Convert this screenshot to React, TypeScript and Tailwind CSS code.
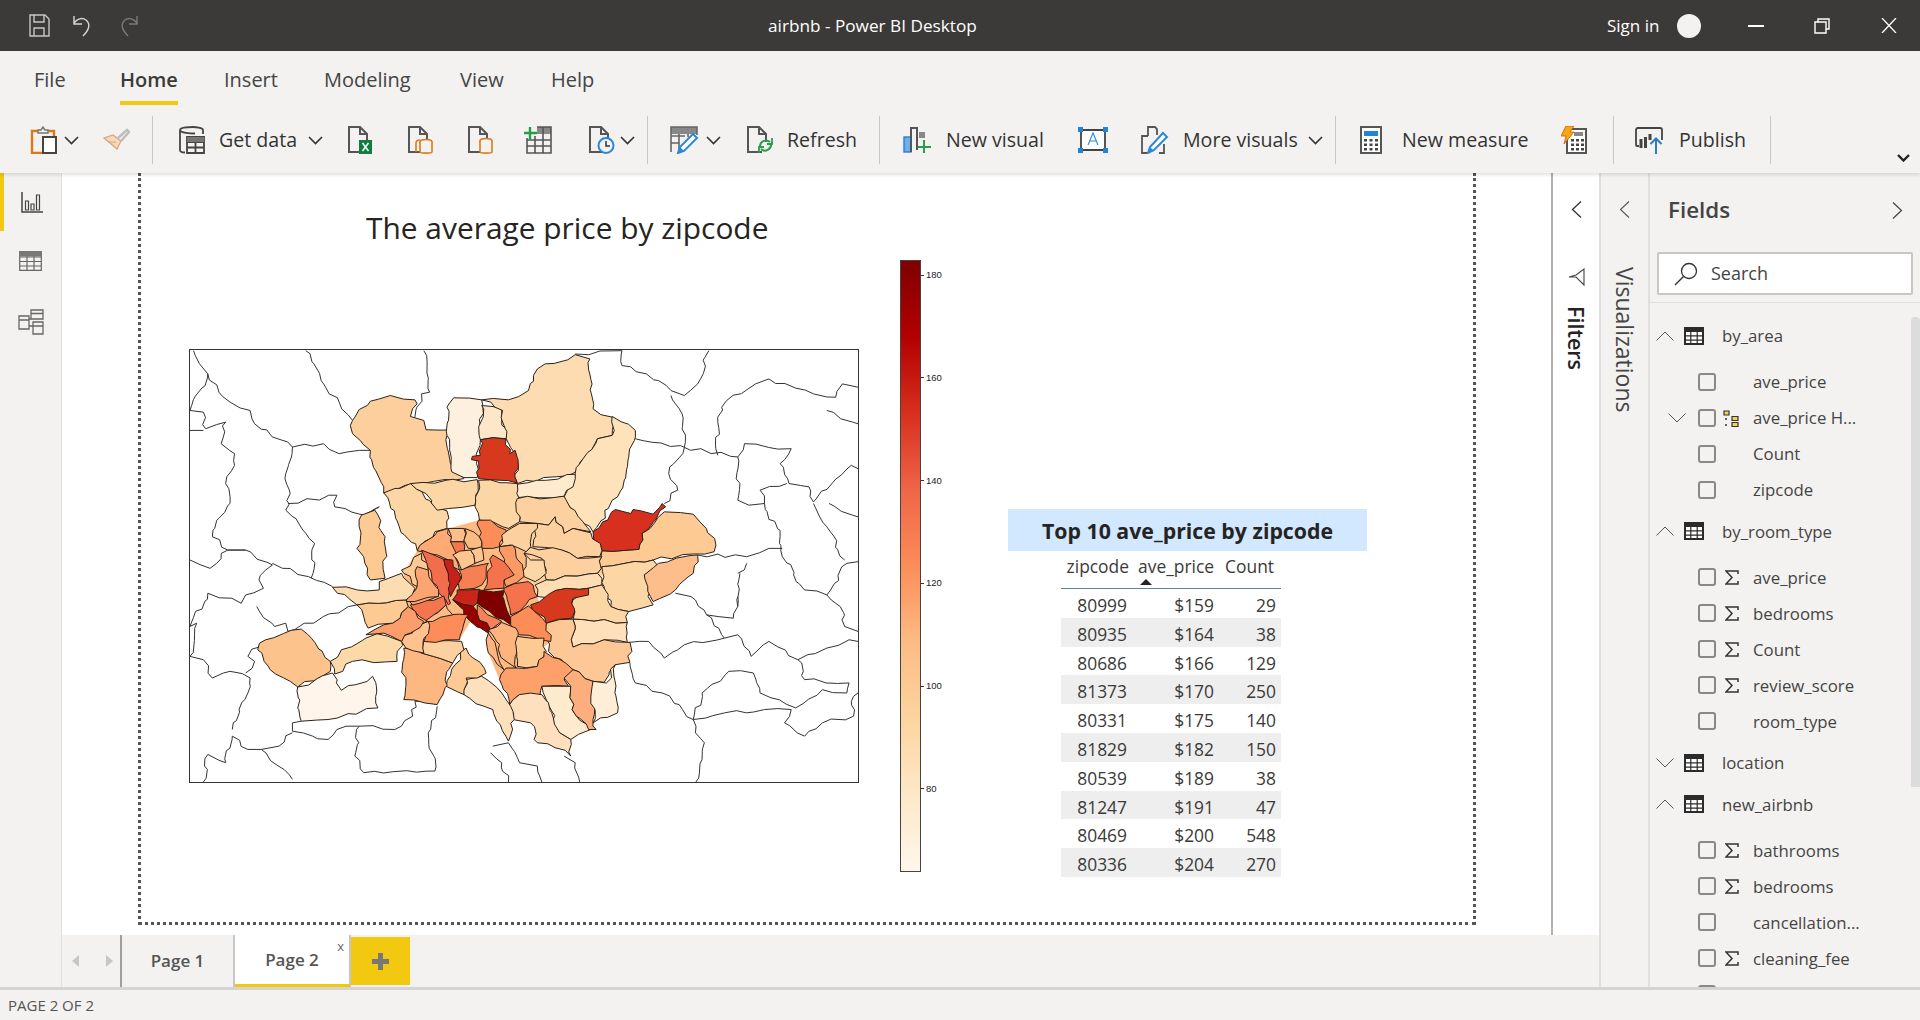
import { ReactNode } from "react";

const SEGOE = "font-['Open_Sans','Noto_Sans',sans-serif]";

// choropleth shapes, coordinates in map units (viewBox 20 28 1500 1300)
const ZONES: [string, string][] = [
  ["#fdcf9c", "385,240 425,182 470,165 525,178 530,190 515,228 545,240 550,268 610,268 597,285 605,370 635,415 520,430 455,458 425,330 385,280"],
  ["#fef0df", "597,285 597,200 612,172 675,178 672,300 665,355 665,412 635,412 608,395"],
  ["#fee6c9", "675,195 720,205 730,295 700,292 672,298"],
  ["#fddcb2", "675,178 735,178 780,150 800,85 885,42 918,55 925,205 968,230 968,285 935,295 880,400 755,430 750,340 730,295 722,210"],
  ["#d7391f", "672,298 700,292 730,296 738,340 750,330 755,428 668,415 668,362 652,358 654,348 672,345"],
  ["#fee2ba", "968,228 1020,270 1018,300 980,470 925,575 880,520 860,470 885,400 935,295 968,285"],
  ["#feeacd", "755,432 885,402 880,440 860,468 755,472"],
  ["#fdd6a6", "455,458 515,430 570,500 597,512 597,565 570,575 530,630 490,560"],
  ["#fdd6a6", "515,430 665,418 660,495 600,505 575,510 550,460"],
  ["#fdd6a6", "668,420 755,430 755,510 760,545 735,565 700,545 670,540 660,500"],
  ["#fdd09f", "755,475 860,468 920,575 880,565 860,580 840,530 825,555 800,550 760,545"],
  ["#fdca94", "1035,580 1085,515 1150,522 1165,545 1198,595 1197,635 1060,660 945,680 935,700 945,632 1028,628"],
  ["#d7301f", "925,575 975,508 1010,520 1015,508 1060,522 1080,490 1088,500 1035,580 1028,628 945,632"],
  ["#fdd09f", "800,550 825,555 840,530 860,580 880,565 920,578 945,632 940,650 890,655 855,630 790,620"],
  ["#fdd09f", "785,622 855,630 890,655 945,650 935,700 820,720 820,690 810,655 770,640"],
  ["#feddb4", "795,735 820,720 935,700 945,735 915,745 840,752 835,775 800,770"],
  ["#fdd6a6", "770,640 785,660 815,660 820,700 795,725 770,710"],
  ["#fdd6a6", "945,680 1060,660 1072,680 1040,705 1060,795 1005,815 965,800 950,740"],
  ["#fdbe8c", "1072,670 1160,645 1150,700 1110,750 1060,785 1040,705"],
  ["#fdd6a6", "880,780 915,745 945,735 965,800 1005,815 1002,848 880,838"],
  ["#fee0bb", "880,838 1002,848 1002,908 950,900 880,922"],
  ["#fdc895", "820,850 880,838 880,922 950,900 1008,908 1008,968 975,975 950,1028 925,1025 880,990 825,935"],
  ["#d7391f", "785,795 840,752 915,745 915,765 880,775 878,835 820,850"],
  ["#fdaa75", "530,632 575,575 600,565 610,615 635,640 615,650 625,690 600,660 555,640"],
  ["#f26d4b", "540,630 590,658 600,700 605,790 600,795 575,755 560,690"],
  ["#c8201a", "590,658 610,660 628,715 615,745 605,770 600,700"],
  ["#fdbe8c", "600,565 635,565 635,605 605,605"],
  ["#f4754e", "605,605 635,605 635,640 620,645"],
  ["#fdbb84", "637,565 670,590 675,625 645,625 635,600"],
  ["#fc8d59", "668,540 695,540 730,570 715,620 700,625 675,625 670,590"],
  ["#fdd09f", "720,585 760,550 800,550 785,620 775,635 740,615 715,620"],
  ["#fc9a65", "715,620 745,615 770,710 730,740 725,670"],
  ["#f4734c", "700,645 725,665 748,705 725,720 725,745 680,750 690,690"],
  ["#f67f53", "625,690 690,670 685,715 660,745 625,750"],
  ["#fdc58f", "610,645 650,630 660,670 630,690"],
  ["#fdc58f", "650,630 675,620 680,660 660,670"],
  ["#c92519", "620,750 670,748 670,785 655,800 610,780"],
  ["#7f0000", "670,750 725,752 740,855 665,790"],
  ["#990000", "610,780 655,798 665,815 695,860 690,880 650,845"],
  ["#f5825a", "665,795 720,845 695,870 665,820"],
  ["#f4734c", "725,745 780,725 800,770 740,825 725,752"],
  ["#fc8d59", "740,830 780,798 820,850 830,905 760,885 740,855"],
  ["#fdb47f", "690,870 720,848 752,865 752,985 730,965"],
  ["#fdb47f", "685,900 690,880 725,990 690,940"],
  ["#fdca94", "755,890 815,895 820,935 800,980 755,980"],
  ["#fda06a", "815,935 880,990 860,1020 870,1040 810,1040 805,1075 760,1065 738,1095 715,1020 730,985 755,985 800,980"],
  ["#feeacd", "810,1040 875,1040 878,1110 920,1170 875,1200 850,1180 820,1080"],
  ["#fcae7c", "880,990 925,1025 925,1140 932,1170 915,1170 878,1110 875,1040 860,1015"],
  ["#feeed7", "925,1025 955,1030 975,975 980,1120 925,1150"],
  ["#fee0be", "738,1095 760,1065 810,1065 850,1180 875,1200 875,1250 840,1225 800,1210 785,1150 745,1140"],
  ["#fde0bd", "640,1020 675,1010 720,1060 740,1100 748,1140 735,1205 700,1110 680,1100 635,1065"],
  ["#fdca94", "640,925 685,1000 665,1015 640,1015 635,1065 595,1040 615,975"],
  ["#fdb780", "500,925 540,940 610,970 575,1095 500,1080"],
  ["#fdd09f", "545,905 630,905 635,930 610,970 540,940"],
  ["#fc8d59", "545,850 595,825 645,825 625,900 545,905"],
  ["#fdc28f", "495,905 525,860 555,845 545,940 505,925"],
  ["#fdbb85", "575,820 595,795 610,825 565,845 550,845"],
  ["#f4754e", "515,795 590,768 595,795 550,842 535,830"],
  ["#fda472", "505,765 555,745 575,770 520,795"],
  ["#fdca94", "495,690 540,640 555,690 530,740 500,700"],
  ["#fda572", "530,680 555,690 578,770 505,785 530,740"],
  ["#fc9d6c", "415,885 455,855 475,850 510,800 545,845 495,905 455,880"],
  ["#fdca94", "395,795 505,780 510,800 475,850 420,865"],
  ["#fddcb2", "340,742 445,750 445,725 495,700 525,745 505,780 395,795"],
  ["#fdca94", "405,525 435,510 458,590 458,715 425,720 410,650 395,625"],
  ["#fed9a8", "335,965 360,930 440,882 495,905 485,965 385,965 345,1003"],
  ["#fdc38c", "172,930 190,900 270,868 335,965 335,995 262,1042 200,990"],
  ["#fff5ea", "262,1042 340,1000 360,1052 430,1010 442,1105 330,1140 270,1145"],
];

// filled under the zones so that their rough edges leave no white slivers
const BACKING: [string, string][] = [
  ["#fdbb84", "530,632 600,565 668,540 760,550 800,550 800,770 830,905 755,985 715,1020 690,940 685,900 690,880 650,845 625,900 545,905 505,785 500,700"],
  ["#fdd09f", "760,545 860,470 945,632 945,735 840,752 800,770 780,725"],
];

const BORDERS = [
  "28,30 60,100 85,155 110,185 155,210 165,250 250,320 235,400 245,460 235,510 300,610 292,715",
  "280,30 320,130 355,185 385,240",
  "545,30 558,155 540,160 525,230",
  "250,320 320,310 355,340 400,330 425,330",
  "240,490 350,465 345,500 410,525 445,500",
  "885,40 990,30 990,75 1045,100 1100,150 1130,165 1160,130 1185,30",
  "1100,165 1125,220 1130,320",
  "1020,295 1250,350",
  "1205,345 1205,230 1225,180 1290,130 1320,115 1420,160 1470,170 1485,130 1520,140",
  "1450,210 1520,250",
  "1250,350 1265,310 1370,325 1345,370 1365,430 1410,440 1420,485 1505,375 1520,385",
  "1130,322 1095,400 1115,450 1085,490",
  "1250,350 1250,480 1275,495 1310,490 1300,450 1360,430",
  "1310,490 1345,590 1350,650 1400,750 1450,765 1495,670 1520,665",
  "1420,490 1450,560 1490,660",
  "1455,490 1520,530",
  "1160,645 1270,650 1320,625 1350,625",
  "1250,700 1270,670",
  "1250,800 1255,700",
  "1110,760 1145,770 1180,825 1240,835 1250,800 1250,770",
  "1180,825 1220,895 1250,885 1280,950 1320,905 1385,960 1450,925 1500,900 1520,905",
  "1005,908 1050,905 1085,955 1130,915 1220,895",
  "1450,765 1480,800 1490,860 1520,875",
  "1385,960 1400,1020 1500,1030 1495,1060 1440,1050 1380,1105 1300,1060 1285,1000 1230,995 1170,1060 1150,1140 1080,1060 1020,1030 1008,970",
  "1150,1140 1155,1180 1175,1210 1155,1330",
  "1150,1140 1220,1120 1310,1110 1370,1110 1355,1150 1400,1190 1440,1150 1510,1130 1510,1070 1520,1060",
  "60,100 20,210",
  "20,270 50,270",
  "20,210 50,215 55,265 100,245 90,310 120,340 120,375 100,430 110,470 70,590 105,630 145,630 205,675 190,690",
  "205,670 340,740",
  "190,690 175,720 185,745 145,765 135,790 60,760 20,860",
  "20,860 35,850 20,950",
  "145,630 105,630 65,685 20,660",
  "20,950 50,960 70,1015 110,995 155,1015 150,1060 115,1170",
  "190,900 150,950 165,965 145,1000",
  "170,800 210,860 235,850 240,875 395,795",
  "270,1145 250,1150 250,1175 330,1200 350,1170 400,1160 480,1170 520,1130 525,1085 575,1095",
  "400,1160 390,1250 410,1300 570,1295 555,1180 575,1100",
  "115,1190 150,1230 180,1230 220,1220 250,1180",
  "180,1230 250,1320",
  "60,1245 100,1270 115,1190",
  "60,1245 50,1328",
  "700,1220 735,1210 760,1270 800,1280 810,1328",
  "695,1240 720,1270 735,1328",
  "860,1250 885,1270 895,1328",
  "445,500 430,510",
];

const ROWS = [
  ["80999", "$159", "29"],
  ["80935", "$164", "38"],
  ["80686", "$166", "129"],
  ["81373", "$170", "250"],
  ["80331", "$175", "140"],
  ["81829", "$182", "150"],
  ["80539", "$189", "38"],
  ["81247", "$191", "47"],
  ["80469", "$200", "548"],
  ["80336", "$204", "270"],
];

type Field = { name: string; sigma?: boolean; hierarchy?: boolean };
type Group = { name: string; open: boolean; fields: Field[] };

const GROUPS: Group[] = [
  {
    name: "by_area",
    open: true,
    fields: [{ name: "ave_price" }, { name: "ave_price H...", hierarchy: true }, { name: "Count" }, { name: "zipcode" }],
  },
  {
    name: "by_room_type",
    open: true,
    fields: [
      { name: "ave_price", sigma: true },
      { name: "bedrooms", sigma: true },
      { name: "Count", sigma: true },
      { name: "review_score", sigma: true },
      { name: "room_type" },
    ],
  },
  { name: "location", open: false, fields: [] },
  {
    name: "new_airbnb",
    open: true,
    fields: [
      { name: "bathrooms", sigma: true },
      { name: "bedrooms", sigma: true },
      { name: "cancellation..." },
      { name: "cleaning_fee", sigma: true },
      { name: "guests_incl..." },
    ],
  },
];

// roughen a boundary: the offset only depends on the segment, so neighbouring zones keep a shared edge
function rough(points: string, closed: boolean) {
  const pts = points.split(" ").map((p) => p.split(",").map(Number));
  const out: string[] = [];
  const count = closed ? pts.length : pts.length - 1;
  for (let i = 0; i < count; i++) {
    const [ax, ay] = pts[i];
    const [bx, by] = pts[(i + 1) % pts.length];
    out.push(`${ax},${ay}`);
    const steps = Math.floor(Math.hypot(bx - ax, (by - ay) * 1.5) / 22);
    const seed = ax + bx + (ay + by) * 7;
    for (let s = 1; s < steps; s++) {
      const t = Math.min(ax, bx) === ax && (ax !== bx || ay < by) ? s / steps : 1 - s / steps;
      const n = Math.sin(seed * 0.37 + Math.min(s, steps - s) * 12.9898 + (t > 0.5 ? 1 : 0) * 4.1);
      const m = Math.cos(seed * 0.53 + Math.min(s, steps - s) * 78.233 + (t > 0.5 ? 1 : 0) * 2.3);
      const k = s / steps;
      out.push(`${(ax + (bx - ax) * k + n * 5).toFixed(1)},${(ay + (by - ay) * k + m * 5).toFixed(1)}`);
    }
  }
  if (!closed) out.push(pts[pts.length - 1].join(","));
  return out.join(" ");
}

function Icon({ w, h, children, className = "" }: { w: number; h: number; children: ReactNode; className?: string }) {
  return (
    <svg width={w} height={h} viewBox={`0 0 ${w} ${h}`} fill="none" className={`shrink-0 ${className}`}>
      {children}
    </svg>
  );
}

function Chevron({ className = "" }: { className?: string }) {
  return (
    <Icon w={15} h={9} className={className}>
      <path d="M1 1l6.5 6.5L14 1" stroke="#333" strokeWidth="1.6" />
    </Icon>
  );
}

function Doc({ children }: { children?: ReactNode }) {
  return (
    <Icon w={27} h={28}>
      <path d="M16 26H2V1h11l7 7v8M13 1v7h7" stroke="#555" strokeWidth="2" />
      {children}
    </Icon>
  );
}

function Divider({ className }: { className: string }) {
  return <div className={`h-[48px] w-px shrink-0 bg-[#c8c6c4] ${className}`} />;
}

function RibbonText({ className, children }: { className: string; children: ReactNode }) {
  return <span className={`shrink-0 whitespace-nowrap text-[19.600px] text-[#333] ${className}`}>{children}</span>;
}

function GridIcon() {
  return (
    <Icon w={20} h={18}>
      <rect width="20" height="18" fill="#2b2b2b" />
      <path d="M2 5h4.2v3.2H2zM7.4 5h5.2v3.2H7.4zM13.8 5H18v3.2h-4.2zM2 9.4h4.2v3.2H2zM7.4 9.4h5.2v3.2H7.4zM13.8 9.4H18v3.2h-4.2zM2 13.8h4.2V16H2zM7.4 13.8h5.2V16H7.4zM13.8 13.8H18V16h-4.2z" fill="#fff" />
    </Icon>
  );
}

function Ribbon() {
  return (
    <div className="relative z-10 h-[122px] shrink-0 bg-[#f3f2f1] shadow-[0_2px_3px_rgba(0,0,0,0.12)]">
      <div className="flex h-[65px] items-start pt-[13px] text-[20px] leading-[32px] text-[#444]">
        <span className="ml-[34px] w-[30px]">File</span>
        <div className="ml-[56px] w-[58px]">
          <span className="font-semibold text-[#3b3a39]">Home</span>
          <div className="mt-[5px] h-[4px] bg-[#f2c811]" />
        </div>
        <span className="ml-[46px] w-[53px]">Insert</span>
        <span className="ml-[47px] w-[87px]">Modeling</span>
        <span className="ml-[49px] w-[44px]">View</span>
        <span className="ml-[47px] w-[43px]">Help</span>
      </div>
      <div className="flex h-[48px] items-center">
        <Icon w={28} h={28} className="ml-[30px]">
          <path d="M2 5h22v22H2z" stroke="#d97a18" strokeWidth="2.4" />
          <path d="M8 7V4h3l2-3 2 3h3v3z" fill="#f3f2f1" stroke="#777" strokeWidth="1.4" />
          <path d="M13 11h13v16H13z" fill="#fff" stroke="#444" strokeWidth="2" />
        </Icon>
        <Chevron className="ml-[6px]" />
        <Icon w={27} h={24} className="ml-[24px]">
          <path d="M1 10l13 11 4-8-8-6z" fill="#f7d7ba" stroke="#d8a47f" strokeWidth="1.2" />
          <path d="M15 10l9-8 2 2-8 9" stroke="#bdbdbd" strokeWidth="2.4" />
          <path d="M5 14l8 0" stroke="#d8a47f" />
        </Icon>
        <Divider className="ml-[22px]" />
        <Icon w={27} h={28} className="ml-[25px]">
          <path d="M17 7.5C13 7.5 2 7 2 4s11-3 13-3 10 .5 10 3v4M2 4v20c0 1.5 2 2.5 5 2.5" stroke="#444" strokeWidth="1.8" />
          <path d="M9 11h17v16H9zM9 16h17M9 21.500h17M17.500 16v11" stroke="#444" strokeWidth="1.8" />
          <path d="M9 11h17v5H9z" fill="#777" />
        </Icon>
        <RibbonText className="ml-[14px] w-[80px]">Get data</RibbonText>
        <Chevron className="ml-[9px]" />
        <div className="ml-[24px]">
          <Doc>
            <rect x="12" y="14" width="13" height="14" fill="#107c41" />
            <path d="M15.500 17l6 8m0-8l-6 8" stroke="#fff" strokeWidth="1.5" />
          </Doc>
        </div>
        <div className="ml-[33px]">
          <Doc>
            <path d="M9 26v-9c0-2 2-3 4-3" stroke="#d97a18" strokeWidth="1.6" />
            <ellipse cx="19" cy="16" rx="6" ry="2.500" stroke="#d97a18" strokeWidth="1.6" fill="#f3f2f1" />
            <path d="M13 16v10c0 1.500 12 1.500 12 0V16" stroke="#d97a18" strokeWidth="1.6" fill="#f3f2f1" />
          </Doc>
        </div>
        <div className="ml-[33px]">
          <Doc>
            <ellipse cx="19" cy="15" rx="6" ry="2.500" stroke="#d97a18" strokeWidth="1.6" fill="#f3f2f1" />
            <path d="M13 15v11c0 1.500 12 1.500 12 0V15" stroke="#d97a18" strokeWidth="1.6" fill="#f3f2f1" />
          </Doc>
        </div>
        <Icon w={28} h={28} className="ml-[30px]">
          <path d="M13 1h14v7H13z" fill="#8a8886" />
          <path d="M3 12v15h24V1h-14M3 14h24M3 20h24M11 10v17M19 1v26" stroke="#555" strokeWidth="1.6" />
          <path d="M6 1v13M0 7h13" stroke="#2a9d4a" strokeWidth="2.4" />
        </Icon>
        <div className="ml-[36px]">
          <Doc>
            <circle cx="18" cy="19.500" r="7.500" fill="#f3f2f1" stroke="#2b88d8" strokeWidth="2" />
            <path d="M18 15v5h4" stroke="#333" strokeWidth="1.5" />
          </Doc>
        </div>
        <Chevron className="ml-[5px]" />
        <Divider className="ml-[12px]" />
        <Icon w={30} h={28} className="ml-[22px]">
          <path d="M1 1h26v7H1z" fill="#8a8886" />
          <path d="M1 26V1h26v8M1 10h14M1 17h8M9 8v18M18 8v3" stroke="#666" strokeWidth="1.6" />
          <path d="M8 27l2-6L23 8l4 4-13 13z" fill="#fff" stroke="#2b88d8" strokeWidth="2" />
          <path d="M10 21l4 4-5 2z" fill="#2b88d8" />
        </Icon>
        <Chevron className="ml-[6px]" />
        <div className="ml-[25px]">
          <Doc>
            <path d="M14 20a6 6 0 0 1 10-4M25 18a6 6 0 0 1-10 5" stroke="#2a9d4a" strokeWidth="2" />
            <path d="M26 12v6h-5M13 27v-6h5" stroke="#2a9d4a" strokeWidth="1.8" />
          </Doc>
        </div>
        <RibbonText className="ml-[14px] w-[68px]">Refresh</RibbonText>
        <Divider className="ml-[24px]" />
        <Icon w={28} h={28} className="ml-[23px]">
          <rect x="1" y="11" width="7" height="15" fill="#6cb0ec" stroke="#2b7cd3" strokeWidth="1.4" />
          <path d="M8 26V2h6v22" stroke="#555" strokeWidth="2" />
          <rect x="16" y="6" width="6" height="6" fill="#8a8886" />
          <path d="M21 14v13M15 21h13" stroke="#2a9d4a" strokeWidth="2" />
        </Icon>
        <RibbonText className="ml-[15px] w-[98px]">New visual</RibbonText>
        <Icon w={30} h={26} className="ml-[34px]">
          <path d="M3 3h24v20H3z" stroke="#444" strokeWidth="1.8" fill="#fff" />
          <path d="M0 0h5v5H0zM25 0h5v5h-5zM0 21h5v5H0zM25 21h5v5h-5z" fill="#1f86d6" />
          <path d="M10 18l5-12 5 12M12 14h6" stroke="#2b88d8" strokeWidth="1.1" />
        </Icon>
        <Icon w={28} h={28} className="ml-[33px]">
          <path d="M7 27H1V10h5M7 10V1h7l2 2v6M23 18v9h-5M6 10h1" stroke="#555" strokeWidth="1.8" />
          <path d="M7 27l2-6L22 7l4 4-13 13z" fill="#fff" stroke="#2b88d8" strokeWidth="2" />
          <path d="M9 21l4 4-6 2z" fill="#2b88d8" />
        </Icon>
        <RibbonText className="ml-[14px] w-[115px]">More visuals</RibbonText>
        <Chevron className="ml-[10px]" />
        <Divider className="ml-[12px]" />
        <Icon w={22} h={28} className="ml-[24px]">
          <rect x="1" y="1" width="20" height="26" fill="#fff" stroke="#555" strokeWidth="2" />
          <rect x="4" y="5" width="14" height="5" fill="#1f86d6" />
          <path d="M4 13h3v2.500H4zM9.500 13h3v2.500h-3zM15 13h3v2.500h-3zM4 17.500h3V20H4zM9.500 17.500h3V20h-3zM15 17.500h3V20h-3zM4 22h3v2.500H4zM9.500 22h3v2.500h-3zM15 22h3v2.500h-3z" fill="#444" />
        </Icon>
        <RibbonText className="ml-[20px] w-[125px]">New measure</RibbonText>
        <Icon w={26} h={28} className="ml-[34px]">
          <rect x="6" y="3" width="19" height="24" fill="#fff" stroke="#555" strokeWidth="2" />
          <rect x="13" y="6" width="9" height="4" fill="#8a8886" />
          <path d="M10 13h3v2.500h-3zM15 13h3v2.500h-3zM20 13h3v2.500h-3zM10 17.500h3V20h-3zM15 17.500h3V20h-3zM20 17.500h3V20h-3zM10 22h3v2.500h-3zM15 22h3v2.500h-3zM20 22h3v2.500h-3z" fill="#444" />
          <path d="M5 0h8L9 6h4L3 18l2-8H0z" fill="#f7a711" stroke="#c75b12" strokeWidth="0.8" />
        </Icon>
        <Divider className="ml-[26px]" />
        <Icon w={30} h={28} className="ml-[21px]">
          <path d="M4 20H2c-1 0-1-1-1-2V4c0-1 .5-2 2-2h22c1 0 2 1 2 2v10" stroke="#444" strokeWidth="1.8" />
          <path d="M6 13v9M10.500 11v11M15 8v6" stroke="#444" strokeWidth="3" />
          <path d="M21 28V13M15.500 18l5.500-5.500 5.500 5.500" stroke="#2b7cb8" strokeWidth="2" />
        </Icon>
        <RibbonText className="ml-[14px] w-[66px]">Publish</RibbonText>
        <Divider className="ml-[25px]" />
        <Icon w={13} h={8} className="ml-[126px] mt-[36px]">
          <path d="M1 1l5.500 5.500L12 1" stroke="#222" strokeWidth="2.400" />
        </Icon>
      </div>
    </div>
  );
}

function TitleBar() {
  return (
    <div className="flex h-[51px] shrink-0 items-center bg-[#3b3a38] text-white">
      <Icon w={22} h={23} className="ml-[28px]">
        <path d="M2 1h15l4 4v17H2zM6 1v7h10V1M6 22v-8h10v8" stroke="#c8c6c4" strokeWidth="1.4" />
      </Icon>
      <Icon w={21} h={23} className="ml-[22px]">
        <path d="M2 2v8h8M2 9c3-4 8-6 12-3 5 4 3 10-3 16" stroke="#d6d6d6" strokeWidth="1.400" />
      </Icon>
      <Icon w={21} h={23} className="ml-[25px]">
        <path d="M19 2v8h-8M19 9c-3-4-8-6-12-3-5 4-3 10 3 16" stroke="#7b7a78" strokeWidth="1.400" />
      </Icon>
      <div className="ml-[629px] w-[208px] whitespace-nowrap text-center text-[17.200px]">airbnb - Power BI Desktop</div>
      <div className="ml-[631px] w-[54px] whitespace-nowrap text-[17px]">Sign in</div>
      <div className="ml-[16px] h-[24px] w-[24px] rounded-full bg-[#f3f2f1]" />
      <div className="ml-[47px] h-[2px] w-[16px] bg-white" />
      <Icon w={17} h={16} className="ml-[50px]">
        <path d="M1 4h11v11H1zM4 4V1h11v10h-3" stroke="#fff" strokeWidth="1.400" />
      </Icon>
      <Icon w={16} h={15} className="ml-[50px]">
        <path d="M1 0l14 15M15 0L1 15" stroke="#fff" strokeWidth="1.300" />
      </Icon>
    </div>
  );
}

function LeftRail() {
  return (
    <div className="flex w-[62px] shrink-0 flex-col border-r border-[#e1dfdd] bg-[#f3f2f1]">
      <div className="flex h-[58px] items-center border-l-[4px] border-[#f2c811] pl-[17px]">
        <Icon w={22} h={21}>
          <path d="M1 0v20h21" stroke="#444" strokeWidth="1.500" />
          <path d="M4.500 9h3v9h-3zM10 12h3v6h-3zM15.500 3h3v15h-3z" stroke="#444" strokeWidth="1.200" />
        </Icon>
      </div>
      <div className="mt-[20px] flex justify-center">
        <Icon w={23} h={20}>
          <path d="M.7.7h21.600v18.600H.7zM.7 6h21.600M.7 10.500h21.600M.7 15h21.600M8 .7v18.600M15 .7v18.600" stroke="#666" strokeWidth="1.200" />
          <path d="M0 0h23v5.500H0z" fill="#777" />
        </Icon>
      </div>
      <div className="mt-[38px] flex justify-center">
        <Icon w={26} h={26}>
          <path d="M1 7h10v13H1zM1 11h10M13 1h12v9H13zM13 4.500h12M15 13h10v12H15zM15 17h10M11 10h2M11 17h4" stroke="#666" strokeWidth="1.300" />
        </Icon>
      </div>
    </div>
  );
}

function PriceMap() {
  return (
    <div className="h-[434px] w-[670px] border border-[#333] bg-white">
      <svg width="668" height="432" viewBox="20 28 1500 1300" preserveAspectRatio="none" className="block">
        {BORDERS.map((line) => (
          <polyline key={line} points={rough(line, false)} fill="none" stroke="#333" strokeWidth="1" vectorEffect="non-scaling-stroke" />
        ))}
        {BACKING.map(([color, points]) => (
          <polygon key={points} points={points} fill={color} />
        ))}
        {ZONES.map(([color, points]) => (
          <polygon key={points} points={rough(points, true)} fill={color} stroke="#2b2118" strokeWidth="1" strokeLinejoin="round" vectorEffect="non-scaling-stroke" />
        ))}
      </svg>
    </div>
  );
}

function ColorBar() {
  return (
    <div className="ml-[41px] mt-[87px] flex h-[612px] w-[108px] shrink-0">
      <div className="h-full w-[21px] border border-[#444] bg-[linear-gradient(to_top,#fff7ec,#fee8c8_12.5%,#fdd49e_25%,#fdbb84_37.5%,#fc8d59_50%,#ef6548_62.5%,#d7301f_75%,#b30000_87.5%,#7f0000)]" />
      <div className="flex flex-col pt-[9px]">
        {[180, 160, 140, 120, 100, 80].map((tick) => (
          <div key={tick} className="flex h-[102.800px] shrink-0 items-start font-['Liberation_Sans',sans-serif] text-[9.500px] leading-[12px] text-[#222]">
            <div className="mr-[2px] mt-[5.500px] h-px w-[3px] bg-[#333]" />
            {tick}
          </div>
        ))}
      </div>
    </div>
  );
}

function TopTable() {
  return (
    <div className={`mt-[336px] w-[359px] shrink-0 ${SEGOE}`}>
      <div className="flex h-[42px] items-center justify-center bg-[#d2e8fe] pt-[1px] text-[21.300px] font-bold whitespace-nowrap text-[#252423]">
        Top 10 ave_price by zipcode
      </div>
      <div className="ml-[53px] w-[220px] text-[17.400px] text-[#3b3a39]">
        <div className="grid h-[38px] grid-cols-[73px_86px_61px] border-b border-[#5b7fa5] leading-[30px]">
          <div className="pr-[5px] text-right">zipcode</div>
          <div className="relative pr-[6px] text-right">
            ave_price
            <div className="absolute left-[6px] top-[28px] h-0 w-0 border-x-[6px] border-b-[6px] border-x-transparent border-b-[#252423]" />
          </div>
          <div className="pr-[7px] text-right">Count</div>
        </div>
        {ROWS.map((row, i) => (
          <div key={row[0]} className={`grid h-[28.800px] grid-cols-[73px_86px_61px] leading-[32px] ${i % 2 ? "bg-[#eeeeee]" : "bg-white"}`}>
            <div className="pr-[7px] text-right">{row[0]}</div>
            <div className="pr-[6px] text-right">{row[1]}</div>
            <div className="pr-[5px] text-right">{row[2]}</div>
          </div>
        ))}
      </div>
    </div>
  );
}

function PageTabs() {
  return (
    <div className="flex h-[52px] shrink-0 bg-[#f3f2f1] text-[17px] font-semibold text-[#555]">
      <div className="flex w-[58px] items-center gap-[27px] pl-[10px]">
        <div className="h-0 w-0 border-y-[6px] border-r-[7px] border-y-transparent border-r-[#c8c6c4]" />
        <div className="h-0 w-0 border-y-[6px] border-l-[7px] border-y-transparent border-l-[#c8c6c4]" />
      </div>
      <div className="flex w-[115px] items-center justify-center border-x-2 border-l-[#a19f9d] border-r-[#c8c6c4]">Page 1</div>
      <div className="relative flex w-[116px] items-center justify-center border-b-[3px] border-r-2 border-[#f2c811] border-r-[#c8c6c4] bg-white">
        Page 2
        <span className="absolute right-[5px] top-[5px] text-[13px] leading-[13px] font-normal text-[#666]">x</span>
      </div>
      <div className="mt-[2px] flex h-[48px] w-[59px] items-center justify-center bg-[#f2c811]">
        <Icon w={17} h={17}>
          <path d="M8.500 0v17M0 8.500h17" stroke="#777" strokeWidth="5" />
        </Icon>
      </div>
    </div>
  );
}

function FieldsPane() {
  return (
    <div className={`flex min-w-0 flex-1 flex-col overflow-hidden bg-[#f3f2f1] ${SEGOE}`}>
      <div className="flex h-[79px] shrink-0 items-start pl-[18px] pt-[21px]">
        <span className="w-[63px] text-[22.400px] leading-[32px] font-semibold whitespace-nowrap text-[#444]">Fields</span>
        <Icon w={11} h={17} className="ml-[161px] mt-[8px]">
          <path d="M1 .5l8.500 8-8.500 8" stroke="#444" strokeWidth="1.200" />
        </Icon>
      </div>
      <div className="mx-[7px] flex h-[43px] shrink-0 items-center rounded-[2px] border-2 border-[#c8c6c4] bg-white pl-[15px]">
        <Icon w={24} h={24}>
          <circle cx="15" cy="9" r="7.500" stroke="#333" strokeWidth="1.300" />
          <path d="M9.500 14.500L1 23" stroke="#333" strokeWidth="1.500" />
        </Icon>
        <span className="ml-[13px] text-[18px] text-[#444]">Search</span>
      </div>
      <div className="mt-[7px] h-px shrink-0 bg-[#e1dfdd]" />
      <div className="relative min-h-0 flex-1 overflow-hidden pt-[15px]">
        <div className="absolute right-0 top-[14px] h-[470px] w-[9px] rounded-t-[4px] bg-[#dcdcdc]" />
        {GROUPS.map((group) => (
          <div key={group.name} className="pb-[5.400px]">
            <div className="flex h-[36px] items-center text-[16.800px] text-[#444]">
              <Icon w={18} h={10} className="ml-[6px]">
                <path d={group.open ? "M.5 9.500L9 1l8.500 8.500" : "M.5.5L9 9l8.500-8.500"} stroke="#555" strokeWidth="1" />
              </Icon>
              <div className="ml-[10px]">
                <GridIcon />
              </div>
              <span className="ml-[18px]">{group.name}</span>
            </div>
            {group.fields.length > 0 && (
              <div className="mt-[10px]">
                {group.fields.map((field) => (
                  <div key={field.name} className="flex h-[36px] items-center text-[16.800px] text-[#444]">
                    <div className="ml-[18px] w-[18px]">
                      {field.hierarchy && (
                        <Icon w={18} h={10}>
                          <path d="M.5.5L9 9l8.500-8.500" stroke="#555" strokeWidth="1" />
                        </Icon>
                      )}
                    </div>
                    <div className="ml-[12px] h-[18px] w-[18px] rounded-[3px] border-2 border-[#8a8886]" />
                    <div className="ml-[7px] flex w-[17px] justify-center">
                      {field.sigma && (
                        <Icon w={14} h={15}>
                          <path d="M13 4V1H1l6 6.500L1 14h12v-3" stroke="#333" strokeWidth="1.500" />
                        </Icon>
                      )}
                      {field.hierarchy && (
                        <Icon w={17} h={17}>
                          <path d="M1 1h5v4H1zM9 6.500h6v4H9zM9 12.500h6v4H9z" fill="#f6d44a" stroke="#333" strokeWidth="1.200" />
                          <path d="M3 8v2M2 9h2M3 14v2M2 15h2" stroke="#333" />
                        </Icon>
                      )}
                    </div>
                    <span className="ml-[13px] whitespace-nowrap">{field.name}</span>
                  </div>
                ))}
              </div>
            )}
          </div>
        ))}
      </div>
    </div>
  );
}

export default function App() {
  return (
    <div className={`flex h-[1020px] w-[1920px] flex-col overflow-hidden bg-[#f3f2f1] ${SEGOE}`}>
      <TitleBar />
      <Ribbon />
      <div className="flex min-h-0 flex-1">
        <LeftRail />
        <div className="flex w-[1537px] shrink-0 flex-col">
          <div className="flex min-h-0 flex-1">
            <div className="w-[1489px] shrink-0 bg-white pl-[76px]">
              <div className="flex h-[752px] w-[1338px] border-x-[3px] border-b-[3px] border-dotted border-[#555]">
                <div className="ml-[48px] w-[670px] shrink-0">
                  <div className="pl-[177px] pt-[35px] text-[29.900px] leading-[40px] font-medium whitespace-nowrap text-[#252423]">
                    The average price by zipcode
                  </div>
                  <div className="mt-[101px]">
                    <PriceMap />
                  </div>
                </div>
                <ColorBar />
                <TopTable />
              </div>
            </div>
            <div className="flex w-[48px] shrink-0 flex-col items-center border-l-2 border-[#b3b0ad] bg-white">
              <Icon w={11} h={17} className="mt-[28px]">
                <path d="M10 .5L1.500 8.500l8.500 8" stroke="#333" strokeWidth="1.300" />
              </Icon>
              <Icon w={17} h={18} className="mt-[50px]">
                <path d="M16 1v16L8 9H1l7-2z" stroke="#444" strokeWidth="1.100" />
              </Icon>
              <span className="mt-[20px] text-[21.500px] leading-[24px] font-semibold text-[#252423] [writing-mode:vertical-rl]">Filters</span>
            </div>
          </div>
          <PageTabs />
        </div>
        <div className="flex w-[51px] shrink-0 flex-col items-center border-x-2 border-[#e1dfdd]">
          <Icon w={11} h={17} className="mt-[28px]">
            <path d="M10 .5L1.500 8.500l8.500 8" stroke="#555" strokeWidth="1.100" />
          </Icon>
          <span className="mt-[49px] text-[23px] leading-[24px] text-[#444] [writing-mode:vertical-rl]">Visualizations</span>
        </div>
        <FieldsPane />
      </div>
      <div className="flex h-[33px] shrink-0 items-center border-t-[3px] border-[#d6d4d2] pl-[8px] text-[15px] text-[#555]">PAGE 2 OF 2</div>
    </div>
  );
}
